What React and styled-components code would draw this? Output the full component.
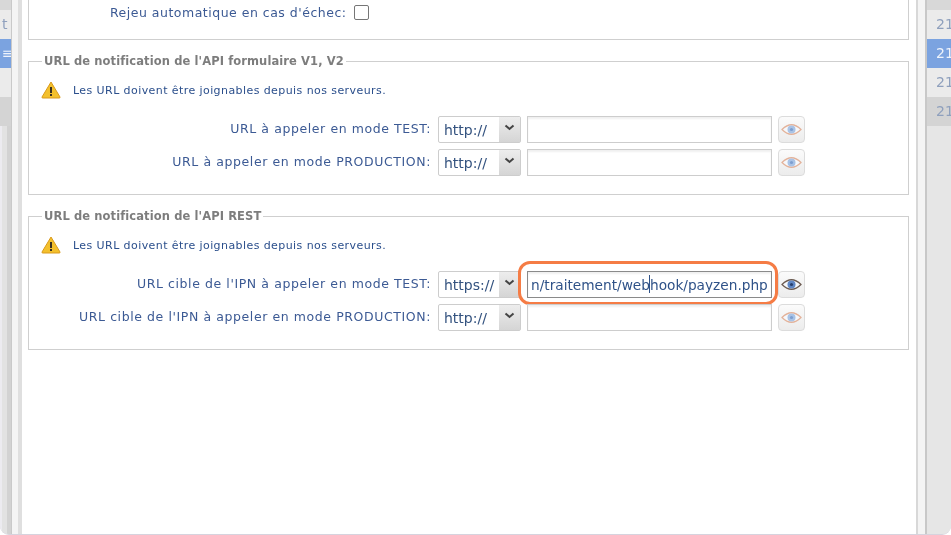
import React from "react";
import styled, { createGlobalStyle, css } from "styled-components";

const Global = createGlobalStyle`
  html, body { margin: 0; padding: 0; background: #fff; }
  body { font-family: "DejaVu Sans", Verdana, sans-serif; overflow: hidden; }
`;
const soft = css`filter: blur(0.3px);`;
const Screen = styled.div`
  width: 951px; height: 535px; display: flex; box-sizing: border-box; overflow: hidden;
  border-bottom: 1px solid #d6d3de; border-radius: 0 0 9px 9px; background: #e4e4e4;
`;
const Rail = styled.div`
  flex: none; width: ${p => p.$w}px; display: flex; flex-direction: column;
  background: ${p => p.$bg}; overflow: hidden; box-sizing: border-box;
`;
const RailCap = styled.div`
  height: 10px; flex: none; background: #d8d8d8;
`;
const RailRow = styled.div`
  height: 29px; flex: none; font-size: 14px; line-height: 29px; padding-left: ${p => p.$pad}px; white-space: nowrap;
  color: ${p => (p.$kind === "sel" ? "#eef3fb" : "#8fa0bd")};
  background: ${p => (p.$kind === "sel" ? "#7ba3e0" : p.$kind === "alt" ? "#d4d4d4" : "#ebebeb")};
  ${soft}
`;
const Gutter = styled.div`
  flex: none; width: ${p => p.$w}px; background: linear-gradient(90deg, ${p => p.$g});
`;
const Dialog = styled.main`
  flex: none; width: 894px; background: #fff; padding: 0 7px 0 6px; box-sizing: border-box;
`;
const Group = styled.fieldset`
  margin: 0 0 14px; padding: 0; border: 1px solid #cfcfcf; min-width: 0; height: ${p => p.$h}px; box-sizing: border-box;
  ${p => p.$open && "border-top: none;"}
`;
const Title = styled.legend`
  margin-left: 13px; padding: 0 2px; font-size: 11.5px; line-height: 14px; font-weight: 700; color: #7d7d7d; letter-spacing: 0.1px;
  ${soft}
`;
const Note = styled.div`
  display: flex; align-items: center; gap: 12px; padding: 11px 0 0 12px; height: 22px;
  font-size: 11px; letter-spacing: 0.42px; color: #2b4f8c;
  ${soft}
`;
const Rows = styled.div`
  padding-top: 12px;
`;
const Row = styled.div`
  display: flex; align-items: center; height: 33px;
`;
const Label = styled.label`
  width: 402px; flex: none; text-align: right; font-size: 12.5px; letter-spacing: 0.59px; color: #3c5a94; white-space: nowrap;
  padding-bottom: 2px;
  ${soft}
`;
const Select = styled.div`
  margin-left: 7px; width: 83px; height: 27px; flex: none; box-sizing: border-box; display: flex;
  border: 1px solid #cdcdcd; border-radius: 2px; background: #fff; font-size: 14px; color: #33527f;
`;
const SelectValue = styled.span`
  flex: 1; padding-left: 5px; line-height: 27px;
  ${soft}
`;
const SelectArrow = styled.span`
  width: 21px; flex: none; display: flex; align-items: flex-start; justify-content: center; padding-top: 7px; box-sizing: border-box;
  background: linear-gradient(#ededed, #d5d5d5);
`;
const InputWrap = styled.div`
  position: relative; margin-left: 6px; flex: none; width: 245px; height: 27px;
`;
const Input = styled.div`
  width: 100%; height: 100%; box-sizing: border-box; border: 1px solid ${p => (p.$active ? "#8a8a8a" : "#cdcdcd")};
  box-shadow: inset 0 2px 2px #f0f0f0; background: #fff; overflow: hidden; font-size: 13.7px; line-height: 27px;
  color: #2f5288; padding-left: 3px; white-space: nowrap;
`;
const InputText = styled.span`
  display: inline-block; ${soft}
`;
const Caret = styled.i`
  position: absolute; left: 122px; top: 4px; width: 1px; height: 18px; background: #2f5288;
`;
const Ring = styled.div`
  position: absolute; left: -9px; right: -6px; top: -10px; bottom: -7px; border: 3px solid #f57c45; border-radius: 12px; pointer-events: none;
`;
const EyeButton = styled.div`
  margin-left: 6px; width: 27px; height: 27px; flex: none; box-sizing: border-box; display: flex; align-items: center; justify-content: center;
  border: 1px solid #dcdcdc; border-radius: 4px; background: linear-gradient(#fbfbfb, #ececec);
`;
const CheckRow = styled.div`
  display: flex; align-items: center; height: 24px; padding-left: 81px; gap: 4px; font-size: 12.5px; letter-spacing: 0.5px; color: #3c5a94;
`;
const CheckText = styled.span`
  ${soft}
`;
const Check = styled.span`
  width: 13px; height: 13px; border: 1px solid #767676; border-radius: 2px; background: #fff; margin-left: 4px; flex: none;
`;

const Warn = () => (
  <svg width="20" height="18" viewBox="0 0 20 18">
    <path d="M10 1 L19 16 Q19.5 17 18 17 H2 Q.5 17 1 16 Z" fill="#f3c02c" stroke="#d99a1c" strokeLinejoin="round" />
    <rect x="9" y="6" width="2" height="6" fill="#3a3020" />
    <rect x="9" y="13" width="2" height="2" fill="#3a3020" />
  </svg>
);
const Eye = ({ dark }) => (
  <svg width="21" height="13" viewBox="0 0 21 13">
    <path d="M1 6.5 Q10.5 -3 20 6.5 Q10.5 16 1 6.5 Z" fill="#f6f8fb" stroke={dark ? "#6b5a50" : "#e3b29a"} strokeWidth="1.2" />
    <circle cx="10.5" cy="6.5" r="4" fill={dark ? "#5f86c4" : "#a9c3e6"} />
    <circle cx="10.5" cy="6.5" r="1.6" fill={dark ? "#28406e" : "#7e9fd0"} />
  </svg>
);
const Chevron = () => (
  <svg width="11" height="7" viewBox="0 0 11 7"><path d="M1.5 1.5 L5.5 5 L9.5 1.5" fill="none" stroke="#444" strokeWidth="2" /></svg>
);

const Field = ({ label, scheme = "http://", value, active }) => (
  <Row>
    <Label>{label}</Label>
    <Select><SelectValue>{scheme}</SelectValue><SelectArrow><Chevron /></SelectArrow></Select>
    <InputWrap>
      <Input $active={active}>{value && <InputText>{value}</InputText>}</Input>
      {active && <Caret />}
      {active && <Ring />}
    </InputWrap>
    <EyeButton><Eye dark={active} /></EyeButton>
  </Row>
);

const Notice = () => <Note><Warn />Les URL doivent être joignables depuis nos serveurs.</Note>;

const leftRows = [["", "t"], ["sel", "≡"], ["", ""], ["alt", ""]];
const rightRows = [["", "21"], ["sel", "21"], ["", "21"], ["alt", "21"]];

export default function App() {
  return (
    <Screen>
      <Global />
      <Rail $w={11} $bg="linear-gradient(90deg, #ecebf0 0 2px, #e2e2e2 2px 7px, #d2d2d2 7px 11px)">
        <RailCap />
        {leftRows.map(([k, t], i) => <RailRow key={i} $kind={k} $pad={2}>{t}</RailRow>)}
      </Rail>
      <Gutter $w={11} $g="#c9c9c9 0 1px, #f4f4f4 1px 7px, #dfdfdf 7px 11px" />
      <Dialog>
        <Group $open $h={40}>
          <CheckRow><CheckText>Rejeu automatique en cas d'échec:</CheckText><Check /></CheckRow>
        </Group>
        <Group $h={141}>
          <Title>URL de notification de l'API formulaire V1, V2</Title>
          <Notice />
          <Rows>
            <Field label="URL à appeler en mode TEST:" />
            <Field label="URL à appeler en mode PRODUCTION:" />
          </Rows>
        </Group>
        <Group $h={141}>
          <Title>URL de notification de l'API REST</Title>
          <Notice />
          <Rows>
            <Field label="URL cible de l'IPN à appeler en mode TEST:" scheme="https://" value="n/traitement/webhook/payzen.php" active />
            <Field label="URL cible de l'IPN à appeler en mode PRODUCTION:" />
          </Rows>
        </Group>
      </Dialog>
      <Gutter $w={11} $g="#d8d8d8 0 2px, #f4f4f4 2px 9px, #c8c8c8 9px 11px" />
      <Rail $w={24} $bg="#e6e6e6">
        <RailCap />
        {rightRows.map(([k, t], i) => <RailRow key={i} $kind={k} $pad={9}>{t}</RailRow>)}
      </Rail>
    </Screen>
  );
}
